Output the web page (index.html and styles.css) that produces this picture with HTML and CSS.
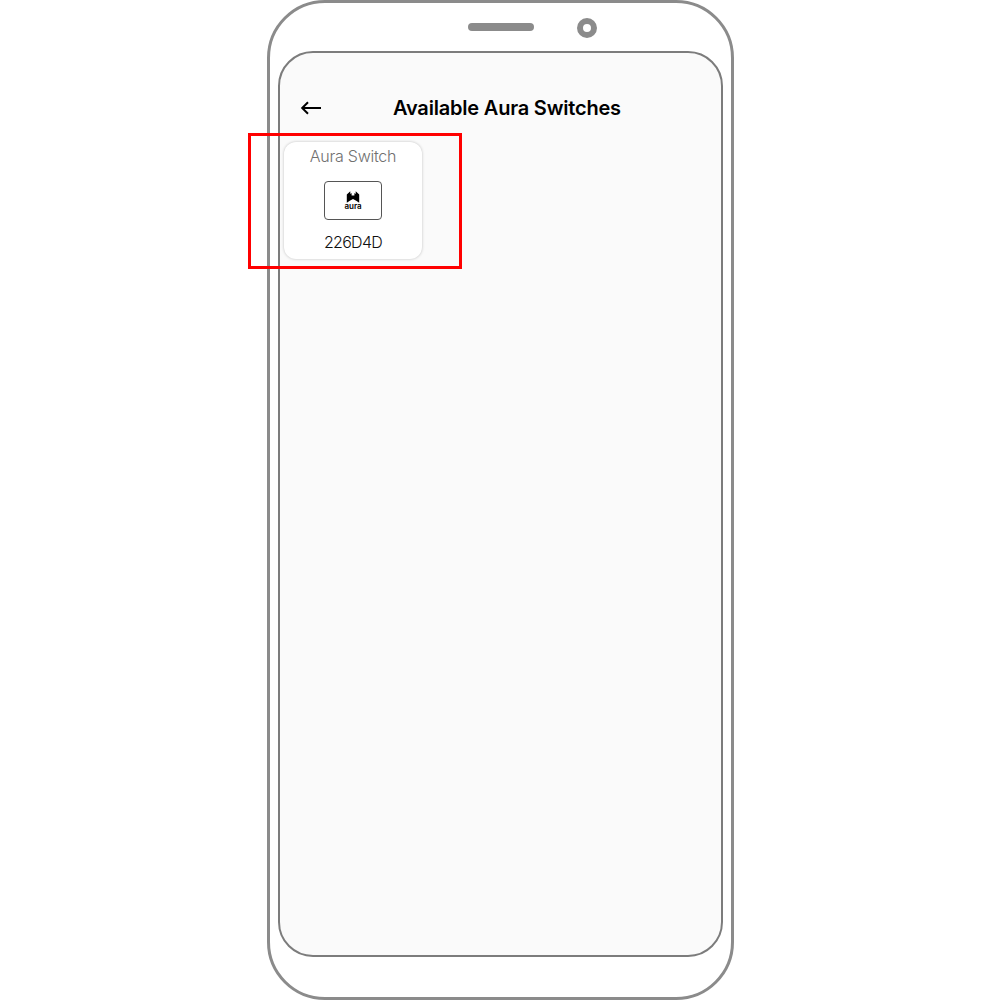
FILE: index.html
```html
<!DOCTYPE html>
<html lang="en">
<head>
<meta charset="utf-8">
<title>Available Aura Switches</title>
<link rel="stylesheet" href="styles.css">
</head>
<body>
<main class="phone">
  <div class="bezel">
    <span class="speaker"></span>
    <span class="camera"></span>
  </div>
  <section class="screen">
    <header class="topbar">
      <svg class="back" viewBox="0 0 22 16" width="22" height="16" aria-label="Back"><path d="M21 8H2M8 2.200L2.200 8 8 13.800" fill="none" stroke="#000" stroke-width="2"/></svg>
      <h1 class="title"><span>Available Aura Switches</span></h1>
    </header>
    <article class="card">
      <span class="highlight"></span>
      <h2 class="name"><span>Aura Switch</span></h2>
      <div class="plate">
        <svg class="mark" viewBox="0 0 14 12" width="14" height="12"><path d="M.8 3.400 4.300.2V3l1.300-1V4.500h2.800V2l1.300 1V.2l3.500 3.200V11.800L10.200 9.800 7 8 3.800 9.800.8 11.800z"/></svg>
        <span class="brand">aura</span>
      </div>
      <p class="code"><span>226D4D</span></p>
    </article>
  </section>
</main>
</body>
</html>
```
FILE: styles.css
```css
* { box-sizing: border-box; }
body { margin: 0; background: #fff; font-family: Inter, "Liberation Sans", sans-serif; overflow: hidden; }
h1, h2, p { margin: 0; font-weight: normal; white-space: nowrap; }
.phone {
  width: 467px; height: 1000px; margin-left: 267px;
  padding: 0 8px; border: 3px solid #8b8b8b; border-radius: 58px;
}
.bezel { height: 48px; display: flex; padding: 13px 0 0 190px; gap: 43px; }
.speaker { width: 66px; height: 8px; margin-top: 7px; border-radius: 4px; background: #8b8b8b; }
.camera { width: 20px; height: 20px; margin-top: 2px; border: 6px solid #8b8b8b; border-radius: 50%; }
.screen {
  width: 445px; height: 906px; padding: 0 4px;
  background: #fafafa; border: 2px solid #7c7c7c; border-radius: 35px;
}
.topbar { height: 89px; display: flex; align-items: flex-start; padding: 47px 0 0 16px; }
.back { display: block; }
.title { width: 228px; margin: -5px 0 0 71px; font-size: 20px; line-height: 26px; font-weight: 600; letter-spacing: -.2px; color: #000; }
.card {
  position: relative; width: 138px; height: 117px; padding-top: 4px;
  display: flex; flex-direction: column; align-items: center;
  background: #fff; border-radius: 12px; box-shadow: 0 0 3px rgba(0,0,0,.24);
}
.highlight { position: absolute; left: -36px; top: -9px; width: 214px; height: 136px; border: 3px solid #f00; }
.name { font-size: 16px; line-height: 20px; font-weight: 300; letter-spacing: -.25px; color: #707070; }
.plate {
  width: 58px; height: 39px; margin-top: 15px; padding-top: 9px;
  display: flex; flex-direction: column; align-items: center;
  border: 1px solid #555; border-radius: 4px;
}
.mark { display: block; }
.brand { margin-top: -1px; font-size: 8px; line-height: 8px; font-weight: 600; }
.code { margin-top: 12px; font-size: 16px; line-height: 20px; font-weight: 300; letter-spacing: -.7px; color: #111; }
```
